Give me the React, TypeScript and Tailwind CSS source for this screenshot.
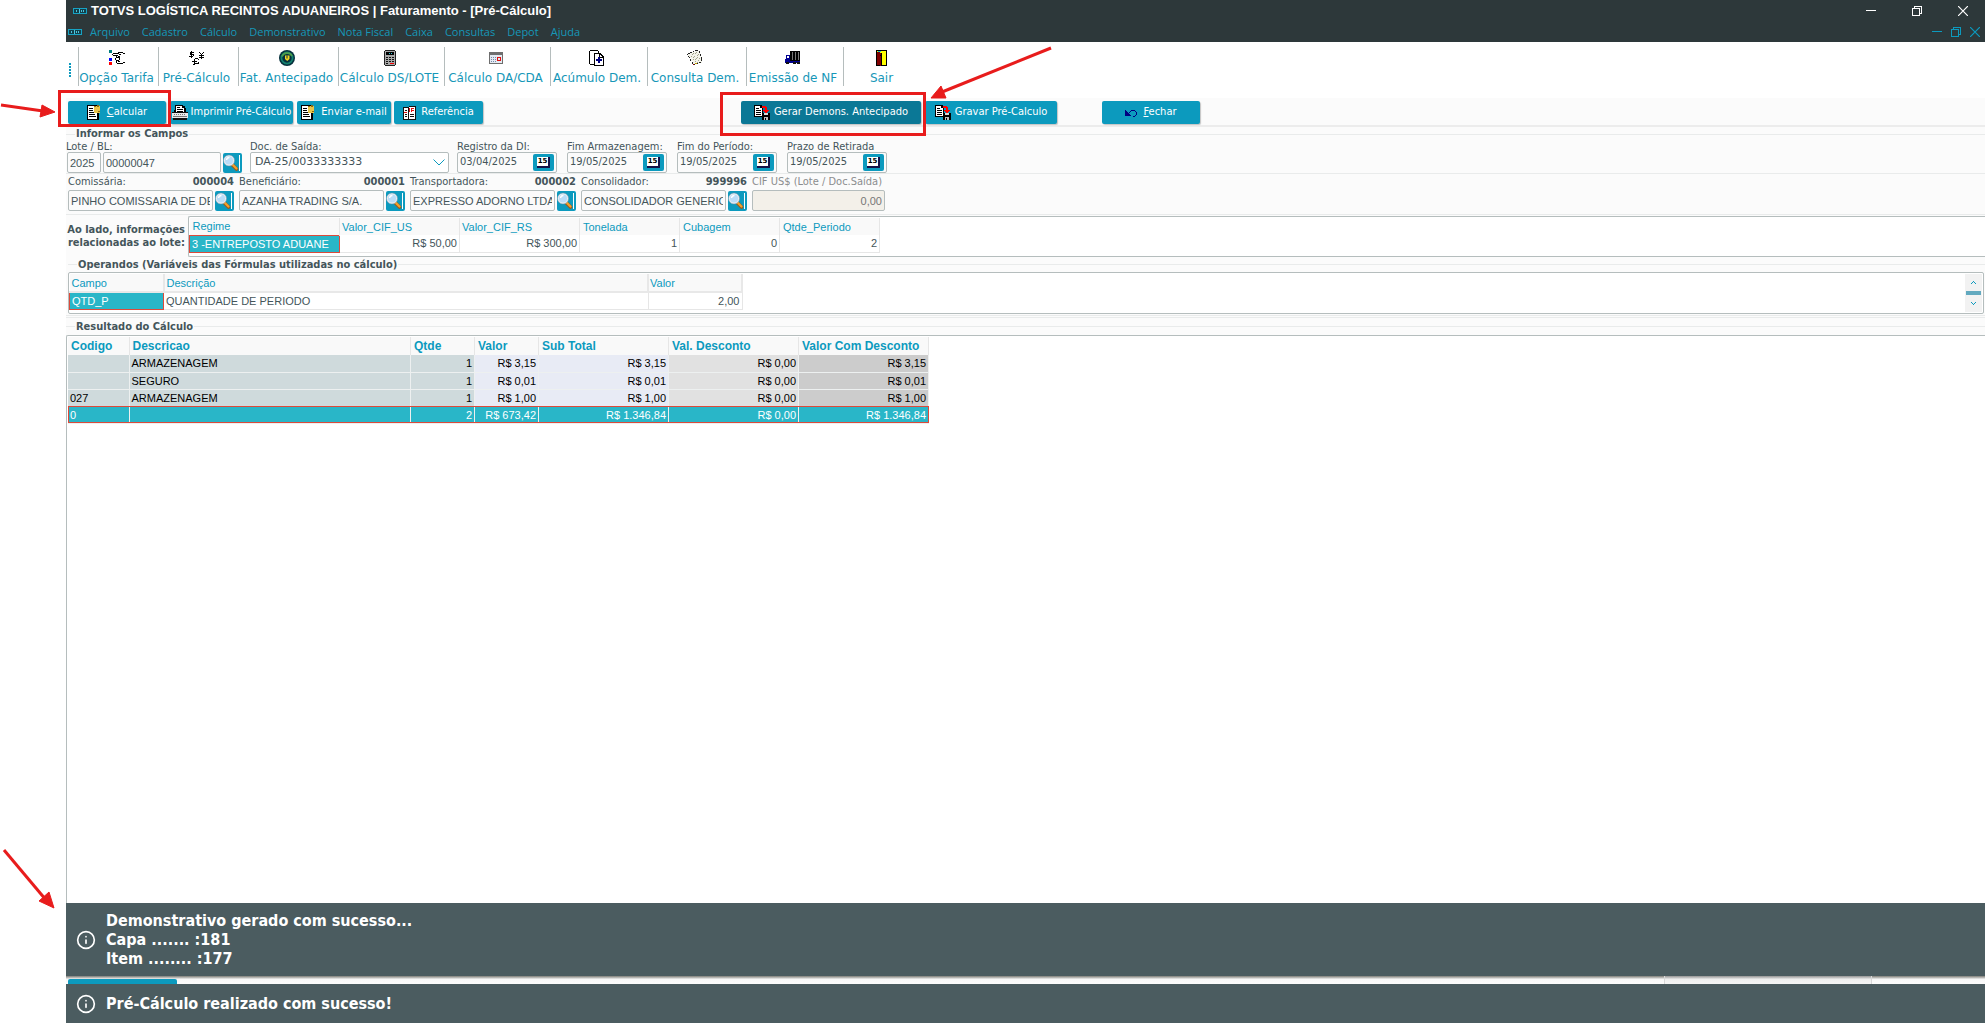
import { ReactNode } from 'react'
import { Info } from 'lucide-react'

const TAHOMA = "font-['DejaVu_Sans_Condensed','Noto_Sans',sans-serif]"
const GRID = "font-['Liberation_Sans',sans-serif]"

const menus = ['Arquivo', 'Cadastro', 'Cálculo', 'Demonstrativo', 'Nota Fiscal', 'Caixa', 'Consultas', 'Depot', 'Ajuda']

function Px({ children, w = 16, h = 16 }: { children: ReactNode; w?: number; h?: number }) {
  return (
    <svg width={w} height={h} viewBox={`0 0 ${w} ${h}`} shapeRendering="crispEdges" className="shrink-0" aria-hidden="true">
      {children}
    </svg>
  )
}

function TotvsMark() {
  return (
    <Px w={14} h={6}>
      <path d="M1 1h12v4H1z" fill="#123f4a" />
      <path d="M1 0h12v1H1zM1 5h12v1H1zM0 0h1v6H0zM13 0h1v6h-1z" fill="#17a3c4" />
      <path d="M3 2h1v2H3zM6 1h1v4H6zM8 2h1v2H8zM10 2h1v2h-1z" fill="#4cc3dc" />
    </Px>
  )
}

function HandIcon() {
  return (
    <Px>
      <path d="M0 0h3v3H0z" fill="#008080" />
      <path d="M0 8h3v3H0z" fill="#00f" />
      <path d="M0 12h3v3H0z" fill="#f00" />
      <path
        d="M4 3h6v1H4zM3 4h1v1H3zM4 5h5v1H4zM10 4h2v1h-2zM9 2h5v1H9zM14 3h2v1h-2zM7 6h1v2H7zM8 7h3v1H8zM6 8h1v2H6zM7 10h3v1H7zM9 6h2v1H9zM10 8h1v2h-1zM7 11h1v2H7zM8 13h6v1H8zM9 11h2v1H9zM14 12h2v1h-2z"
        fill="#000"
      />
    </Px>
  )
}

function CurrencyIcon() {
  return (
    <Px>
      <path
        d="M2 1h1v7H2zM1 2h4v1H1zM1 3h1v1H1zM1 4h4v1H1zM4 5h1v1H4zM0 6h4v1H0zM10 2h1v1h-1zM14 2h1v1h-1zM11 3h1v1h-1zM13 3h1v1h-1zM12 4h1v5h-1zM10 5h5v1h-5zM10 7h5v1h-5zM6 8h3v1H6zM5 9h1v3H5zM3 11h5v1H3zM5 12h1v2H5zM4 14h2v1H4zM6 13h4v1H6zM9 12h1v1H9zM9 9h1v1H9z"
        fill="#000"
      />
    </Px>
  )
}

function CoinIcon() {
  return (
    <svg width="16" height="16" viewBox="0 0 16 16" className="shrink-0" aria-hidden="true">
      <circle cx="8" cy="8" r="8" fill="#06303c" />
      <circle cx="8" cy="8" r="5.6" fill="none" stroke="#14806f" strokeWidth="1.8" />
      <path d="M3 6.5A5.6 5.6 0 0 1 13 6" fill="none" stroke="#4f9f4a" strokeWidth="1.6" />
      <path d="M6 5.5h4.500v3.500L8.200 11 6 9z" fill="#f3d321" />
      <path d="M8 5.500v3" stroke="#06303c" strokeWidth="1" />
    </svg>
  )
}

function CalculatorIcon() {
  return (
    <Px w={12}>
      <path d="M1 0h10v1H1zM0 1h1v14H0zM11 1h1v14h-1zM1 15h10v1H1z" fill="#222" />
      <path d="M1 1h10v14H1z" fill="#a8a8a8" />
      <path d="M2 2h8v3H2z" fill="#000" />
      <path d="M5 3h1v1H5zM7 3h1v1H7z" fill="#2dc7d8" />
      <path d="M2 7h2v1H2zM5 7h2v1H5zM8 7h2v1H8zM2 9h2v1H2zM5 9h2v1H5zM8 9h2v1H8zM2 11h2v1H2zM5 11h2v1H5zM8 11h2v1H8zM2 13h2v1H2z" fill="#111" />
      <path d="M6 13h4v1H6z" fill="#e00" />
    </Px>
  )
}

function ScheduleIcon() {
  return (
    <Px w={14} h={13}>
      <path d="M0 0h14v12H0z" fill="#6e6e6e" />
      <path d="M1 3h12v8H1z" fill="#e4eaf2" />
      <path d="M2 5h1v1H2zM4 5h1v1H4zM6 5h1v1H6zM2 7h1v1H2zM4 7h1v1H4zM6 7h1v1H6zM2 9h1v1H2zM4 9h1v1H4zM6 9h1v1H6z" fill="#7689a8" />
      <path d="M8 5h4v1H8zM8 6h1v3H8zM11 6h1v3h-1zM8 8h4v1H8z" fill="#e01010" />
    </Px>
  )
}

function CopyPlusIcon() {
  return (
    <Px>
      <path d="M1 0h8v1H1zM0 1h1v13H0zM1 14h4v1H1zM9 1h1v2H9z" fill="#000" />
      <path d="M5 3h6l4 4v9H5z" fill="#000" />
      <path d="M6 4h4v4h4v7H6z" fill="#fff" />
      <path d="M11 5h1v1h1v1h-2z" fill="#fff" />
      <path d="M9 7h2v6H9zM7 9h6v2H7z" fill="#000080" />
    </Px>
  )
}

function SheetsIcon() {
  return (
    <Px>
      <path d="M1 4h2V3h2V2h3V1h4v1h1v3h1v3h1v5h-3v1H6v-3H4V8H2V6H1z" fill="#f3f3ea" />
      <path
        d="M0 4h1v1H0zM1 3h2v1H1zM3 2h2v1H3zM6 1h1v1H6zM8 0h3v1H8zM12 1h1v2h-1zM13 4h1v2h-1zM14 7h1v4h-1zM12 12h2v1h-2zM9 13h2v1H9zM6 14h2v1H6zM5 12h1v2H5zM3 9h1v2H3zM2 7h1v1H2zM1 6h1v1H1z"
        fill="#222"
      />
      <path d="M5 4h1v1H5zM8 3h1v1H8zM10 5h1v1h-1zM7 6h1v1H7zM4 6h1v1H4zM9 8h1v1H9zM6 9h1v1H6zM11 10h1v1h-1zM8 11h1v1H8zM6 3h1v1H6zM9 2h1v1H9zM11 4h1v1h-1zM6 7h1v1H6zM10 7h1v1h-1zM12 8h1v1h-1zM8 9h1v1H8zM10 12h1v1h-1z" fill="#a3a48c" />
      <path d="M6 14h1v1H6z" fill="#a00000" />
      <path d="M8 13h2v1H8z" fill="#c8a000" />
    </Px>
  )
}

function TruckIcon() {
  return (
    <Px>
      <path d="M5 1h10v11H5z" fill="#000" />
      <path d="M7 2h1v8H7zM10 2h1v8h-1zM13 2h1v8h-1z" fill="#777" />
      <path d="M1 5h4v8H1zM0 9h1v4H0zM5 11h10v2H5z" fill="#000090" />
      <path d="M2 6h2v2H2z" fill="#fff" />
      <path d="M1 12h3v2H1zM8 12h3v2H8zM12 12h3v2h-3z" fill="#111" />
    </Px>
  )
}

function DoorIcon() {
  return (
    <Px w={11}>
      <path d="M0 0h11v16H0z" fill="#000" />
      <path d="M1 1h9v14H1z" fill="#ff0" />
      <path d="M1 2h3v1h2v12H5v1H4v-1H1z" fill="#800000" />
      <path d="M2 1h3v1H2z" fill="#19c8d8" />
      <path d="M5 3h1v12H5zM4 5h1v1H4z" fill="#000" />
    </Px>
  )
}

function NoteIcon() {
  return (
    <Px w={14} h={15}>
      <path d="M0 0h12v15H0z" fill="#000" />
      <path d="M1 1h9v13H1z" fill="#fff" />
      <path d="M2 3h4v1H2zM2 5h4v1H2zM2 7h5v1H2zM2 9h6v1H2zM2 11h7v1H2z" fill="#000" />
      <path d="M7 1h6v7H7z" fill="#e9c54b" />
      <path d="M7 1h2v1H7zM10 0h2v2h-2zM11 6h2v1h-2z" fill="#8a6d12" />
    </Px>
  )
}

function PrinterIcon() {
  return (
    <Px w={16} h={15}>
      <path d="M3 0h8v1h2v2h1v5H2V5h1z" fill="#000" />
      <path d="M4 1h6v2h2v5H4z" fill="#fff" />
      <path d="M5 2h3v1H5zM5 4h6v1H5zM5 6h6v1H5z" fill="#000" />
      <path d="M0 8h16v5H0z" fill="#e8e8e8" />
      <path d="M0 7h16v1H0zM1 13h14v2H1z" fill="#111" />
      <path d="M2 9h1v1H2zM4 9h1v1H4zM6 9h1v1H6zM8 9h1v1H8zM10 9h1v1h-1zM12 9h1v1h-1zM1 11h14v1H1z" fill="#777" />
    </Px>
  )
}

function ReferenceIcon() {
  return (
    <Px w={13} h={14}>
      <path d="M0 1h6v-1h7v14H0z" fill="#111" />
      <path d="M1 2h4v11H1zM6 1h6v12H6z" fill="#fff" />
      <path d="M2 4h2v1H2zM2 8h2v1H2zM2 10h2v1H2zM7 8h4v1H7zM7 10h4v1H7z" fill="#111" />
      <path d="M6 2h1v4H6zM8 2h3v1H8zM8 3h1v3H8zM9 4h2v1H9zM1 6h3v1H1z" fill="#e01010" />
    </Px>
  )
}

function SaveDocIcon() {
  return (
    <Px w={16} h={15}>
      <path d="M0 0h7l2 2v10H0z" fill="#000" />
      <path d="M1 1h5v2h2v8H1z" fill="#fff" />
      <path d="M2 3h3v1H2zM2 5h5v1H2zM2 7h5v1H2zM2 9h5v1H2z" fill="#000" />
      <path d="M8 1h4v1h1v3h2v1h-1v1h-1v1h-2V7h-1V6H9V5h2V3H8z" fill="#f00" />
      <path d="M8 8h8v7H8z" fill="#000" />
      <path d="M10 8h4v2h-4z" fill="#d8d8d8" />
      <path d="M10 12h4v3h-4z" fill="#bbb" />
      <path d="M11 13h1v2h-1z" fill="#000" />
    </Px>
  )
}

function UndoIcon() {
  return (
    <Px w={13} h={8}>
      <path d="M0 1h1v6H0zM1 2h1v5H1zM2 3h1v4H2zM3 4h1v3H3zM4 5h1v2H4zM5 6h1v1H5zM4 3h1v1H4zM5 2h1v1H5zM6 1h4v1H6zM10 2h1v1h-1zM11 3h1v3h-1zM10 6h1v1h-1zM8 7h2v1H8z" fill="#000080" />
    </Px>
  )
}

function SearchButton({ label }: { label: string }) {
  return (
    <button aria-label={label} className="flex h-[20px] w-[19px] shrink-0 items-center rounded-[2px] bg-[#0c9abe]">
      <svg width="16" height="17" viewBox="0 0 16 17" aria-hidden="true">
        <path d="M8.500 10l5 5" stroke="#9a5a1a" strokeWidth="3.600" strokeLinecap="round" />
        <path d="M9 10l4.500 4.500" stroke="#f5a02c" strokeWidth="2.200" strokeLinecap="round" />
        <circle cx="6" cy="6.500" r="4.800" fill="#b9dcf7" stroke="#e9eef3" strokeWidth="1.500" />
        <circle cx="6" cy="6.500" r="5.500" fill="none" stroke="#6f8da3" strokeWidth="0.500" />
        <path d="M3.500 6a3 3 0 0 1 3-2.500" fill="none" stroke="#fff" strokeWidth="1.400" />
      </svg>
      <span className="h-[16px] w-px bg-white" />
    </button>
  )
}

const tools = [
  { label: 'Opção Tarifa', icon: <HandIcon />, width: 'w-[80px]' },
  { label: 'Pré-Cálculo', icon: <CurrencyIcon />, width: 'w-[80px]' },
  { label: 'Fat. Antecipado', icon: <CoinIcon />, width: 'w-[100px]' },
  { label: 'Cálculo DS/LOTE', icon: <CalculatorIcon />, width: 'w-[106px]' },
  { label: 'Cálculo DA/CDA', icon: <ScheduleIcon />, width: 'w-[106px]' },
  { label: 'Acúmulo Dem.', icon: <CopyPlusIcon />, width: 'w-[97px]' },
  { label: 'Consulta Dem.', icon: <SheetsIcon />, width: 'w-[99px]' },
  { label: 'Emissão de NF', icon: <TruckIcon />, width: 'w-[97px]' },
  { label: 'Sair', icon: <DoorIcon />, width: 'w-[80px]' },
]

function WindowButtons({ small = false }: { small?: boolean }) {
  return (
    <div className={small ? 'flex items-center gap-[9px] pr-[5px] text-[#0c9abe]' : 'flex items-center gap-[36px] pr-[17px] text-white'}>
      <button aria-label="Minimizar"><Px w={10} h={10}><path d="M0 4h10v1H0z" fill="currentColor" /></Px></button>
      <button aria-label="Restaurar"><Px w={10} h={10}><path d="M2 0h8v8H8V7h1V1H3v1H2zM0 2h8v8H0zM1 3v6h6V3z" fill="currentColor" fillRule="evenodd" /></Px></button>
      <button aria-label="Fechar janela">
        <svg width="10" height="10" viewBox="0 0 10 10"><path d="M0 0l10 10M10 0L0 10" stroke="currentColor" strokeWidth="1.200" /></svg>
      </button>
    </div>
  )
}

function ActionButton({ icon, children, className }: { icon: ReactNode; children: ReactNode; className: string }) {
  return (
    <button className={`flex h-[23px] shrink-0 items-center justify-center rounded-[2px] text-[11px] whitespace-nowrap text-white shadow-[1px_1px_1px_#c4c4c4] ${className}`}>
      {icon}
      <span>{children}</span>
    </button>
  )
}

function Legend({ children, className }: { children: ReactNode; className: string }) {
  return (
    <div className={`flex items-center ${className}`}>
      <span className="h-px w-[9px] bg-[#e9ebeb]" />
      <h2 className="px-px text-[11px] leading-[14px] font-bold whitespace-nowrap">{children}</h2>
      <span className="h-px flex-1 bg-[#e9ebeb]" />
    </div>
  )
}

const dates = [
  { id: 'registro', label: 'Registro da DI:', value: '03/04/2025' },
  { id: 'fim-armazenagem', label: 'Fim Armazenagem:', value: '19/05/2025' },
  { id: 'fim-periodo', label: 'Fim do Período:', value: '19/05/2025' },
  { id: 'prazo', label: 'Prazo de Retirada', value: '19/05/2025' },
]

const parties = [
  { id: 'comissaria', label: 'Comissária:', code: '000004', value: 'PINHO COMISSARIA DE DE' },
  { id: 'beneficiario', label: 'Beneficiário:', code: '000001', value: 'AZANHA TRADING S/A.' },
  { id: 'transportadora', label: 'Transportadora:', code: '000002', value: 'EXPRESSO ADORNO LTDA' },
  { id: 'consolidador', label: 'Consolidador:', code: '999996', value: 'CONSOLIDADOR GENERICO' },
]

const results = [
  ['', 'ARMAZENAGEM', '1', 'R$ 3,15', 'R$ 3,15', 'R$ 0,00', 'R$ 3,15'],
  ['', 'SEGURO', '1', 'R$ 0,01', 'R$ 0,01', 'R$ 0,00', 'R$ 0,01'],
  ['027', 'ARMAZENAGEM', '1', 'R$ 1,00', 'R$ 1,00', 'R$ 0,00', 'R$ 1,00'],
  ['0', '', '2', 'R$ 673,42', 'R$ 1.346,84', 'R$ 0,00', 'R$ 1.346,84'],
]
const resultColors = ['bg-[#cfdadc]', 'bg-[#cfdadc]', 'bg-[#cfdadc]', 'bg-[#e8ebf5]', 'bg-[#e8ebf5]', 'bg-[#e1e1e1]', 'bg-[#cccccc]']

const input = 'block h-[21px] rounded-[2px] border border-[#b5bdbd] bg-[#fbfbfb] px-[2px]'

function Field({ id, label, children }: { id: string; label: string; children: ReactNode }) {
  return (
    <div className="flex flex-col">
      <label htmlFor={id} className="h-[11px] text-[11px] leading-[11px] whitespace-nowrap">{label}</label>
      {children}
    </div>
  )
}

function Notice({ children, className }: { children: ReactNode; className: string }) {
  return (
    <div role="status" className={`flex items-center gap-[10px] bg-[#4b5c60] pl-[10px] text-[16px] leading-[19px] font-bold text-white ${className}`}>
      <Info size={20} strokeWidth={2} />
      <div>{children}</div>
    </div>
  )
}

export default function App() {
  return (
    <div className={`relative flex min-h-screen bg-white text-[#44555a] ${TAHOMA}`}>
      <div className="w-[66px] shrink-0" />

      <div className="flex min-w-0 flex-1 flex-col">
        <header className="bg-[#2d383a]">
          <div className="flex h-[21px] items-center justify-between pl-[7px]">
            <div className="flex items-center gap-[4px]">
              <TotvsMark />
              <h1 className="font-['Liberation_Sans',sans-serif] text-[13px] leading-[20px] font-bold text-white">
                TOTVS LOGÍSTICA RECINTOS ADUANEIROS | Faturamento - [Pré-Cálculo]
              </h1>
            </div>
            <WindowButtons />
          </div>
          <div className="flex h-[21px] items-center justify-between pl-[2px]">
            <nav className="flex items-center">
              <TotvsMark />
              <div className="flex gap-[12px] pl-[8px] font-['Open_Sans',sans-serif] text-[11px] leading-[20px] text-[#1697b8]">
                {menus.map((m) => (
                  <a key={m} href="#">{m}</a>
                ))}
              </div>
            </nav>
            <WindowButtons small />
          </div>
        </header>

        <div className="flex h-[56px] items-start bg-white pt-[5px]">
          <div className="flex w-[12px] flex-col gap-px pt-[16px] pl-[3px]">
            {[0, 1, 2, 3, 4].map((n) => (
              <span key={n} className="size-[2px] bg-[#0c9abe]" />
            ))}
          </div>
          {tools.map((t) => (
            <button key={t.label} className={`flex h-[39px] flex-col items-center justify-between border-l border-[#b5bdbd] pr-[4px] ${t.width}`}>
              <span className="flex h-[22px] items-center">{t.icon}</span>
              <span className="font-['DejaVu_Sans',sans-serif] text-[12px] leading-[16px] whitespace-nowrap text-[#1697b8]">{t.label}</span>
            </button>
          ))}
        </div>

        <div className="flex h-[29px] items-start border-b-2 border-[#ececec] bg-[#fbfbfb] pt-[3px] pl-[2px]">
          <div className="relative">
            <ActionButton icon={<NoteIcon />} className="w-[98px] gap-[6px] bg-[#0c9abe]"><u>C</u>alcular</ActionButton>
            <div className="pointer-events-none absolute -top-[11px] -right-[5px] -bottom-[3px] -left-[10px] z-10 border-3 border-[#e81c1c]" />
          </div>
          <ActionButton icon={<PrinterIcon />} className="ml-[4px] w-[123px] gap-[3px] bg-[#0c9abe]">Imprimir Pré-Cálculo</ActionButton>
          <ActionButton icon={<NoteIcon />} className="ml-[4px] w-[94px] gap-[6px] bg-[#0c9abe]">Enviar e-mail</ActionButton>
          <ActionButton icon={<ReferenceIcon />} className="ml-[3px] w-[89px] gap-[5px] bg-[#0c9abe]">Referência</ActionButton>
          <div className="relative ml-[258px]">
            <ActionButton icon={<SaveDocIcon />} className="w-[180px] gap-[4px] bg-[#0b7896]">Gerar Demons. Antecipado</ActionButton>
            <div className="pointer-events-none absolute -top-[9px] -right-[5px] -bottom-[12px] -left-[21px] z-10 border-3 border-[#e81c1c]" />
          </div>
          <ActionButton icon={<SaveDocIcon />} className="ml-[4px] w-[132px] gap-[4px] bg-[#0c9abe]">Gravar Pré-Calculo</ActionButton>
          <ActionButton icon={<UndoIcon />} className="ml-[45px] w-[98px] gap-[5px] bg-[#0c9abe]"><u>F</u>echar</ActionButton>
        </div>

        <section className="bg-[#fbfbfb]">
          <Legend className="h-[14px]">Informar os Campos</Legend>
          <div className="flex border-b border-[#e9ebeb]">
            <Field id="lote" label="Lote / BL:">
              <div className={`flex items-center gap-[2px] pl-px text-[11px] ${GRID}`}>
                <input aria-label="Ano do lote" defaultValue="2025" className={`${input} w-[34px]`} />
                <input id="lote" defaultValue="00000047" className={`${input} w-[118px]`} />
                <SearchButton label="Pesquisar lote" />
              </div>
            </Field>
            <div className="ml-[8px]">
              <Field id="doc" label="Doc. de Saída:">
                <div className="relative">
                  <select id="doc" className="block h-[21px] w-[199px] appearance-none rounded-[2px] border border-[#b5bdbd] bg-white pl-[4px] font-['DejaVu_Sans',sans-serif] text-[11px]">
                    <option>DA-25/0033333333</option>
                  </select>
                  <svg width="12" height="7" viewBox="0 0 12 7" className="pointer-events-none absolute top-[7px] right-[4px]">
                    <path d="M.5.5L6 6l5.500-5.500" fill="none" stroke="#0c9abe" />
                  </svg>
                </div>
              </Field>
            </div>
            <div className="ml-[8px] flex gap-[10px]">
              {dates.map((d) => (
                <Field key={d.id} id={d.id} label={d.label}>
                  <div className="flex h-[21px] w-[100px] items-center justify-between rounded-[2px] border border-[#b5bdbd] bg-[#fbfbfb] px-[2px]">
                    <input id={d.id} defaultValue={d.value} className="w-[66px] bg-transparent text-[11px]" />
                    <button aria-label={`Calendário ${d.label}`} className="flex h-[17px] w-[21px] items-center justify-center rounded-[2px] bg-[#0c9abe]">
                      <span className="border-r-2 border-b-2 border-[#12124a] bg-white px-px font-['DejaVu_Sans',sans-serif] text-[7px] leading-[9px] font-bold text-black">15</span>
                    </button>
                  </div>
                </Field>
              ))}
            </div>
          </div>

          <div className="flex gap-[5px] border-b border-[#e9ebeb] pb-[3px] pl-[2px]">
            {parties.map((p) => (
              <div key={p.id} className="w-[166px]">
                <div className="flex h-[16px] items-center justify-between text-[11px] leading-[16px]">
                  <label htmlFor={p.id}>{p.label}</label>
                  <b>{p.code}</b>
                </div>
                <div className={`flex items-center gap-[2px] text-[11px] ${GRID}`}>
                  <input id={p.id} defaultValue={p.value} className={`${input} w-[145px]`} />
                  <SearchButton label={`Pesquisar ${p.label}`} />
                </div>
              </div>
            ))}
            <div className="w-[133px]">
              <label htmlFor="cif" className="block h-[16px] text-[11px] leading-[16px] whitespace-nowrap text-[#8b8d8e]">CIF US$ (Lote / Doc.Saída)</label>
              <input id="cif" defaultValue="0,00" readOnly className={`block h-[21px] w-full rounded-[2px] border border-[#b5bdbd] bg-[#f3f0e9] px-[2px] text-right text-[11px] text-[#777] ${GRID}`} />
            </div>
          </div>

          <div className="flex pt-px">
            <p className="w-[122px] pt-[7px] pr-[3px] text-right text-[11px] leading-[13px] font-bold whitespace-nowrap">
              Ao lado, informações
              <br />
              relacionadas ao lote:
            </p>
            <div className="h-[41px] flex-1 rounded-l-[2px] border border-r-0 border-[#b5bdbd] bg-white pt-px">
              <table className={`w-[690px] table-fixed border-collapse text-[11px] leading-[14px] ${GRID}`}>
                <thead>
                  <tr className="h-[17px] bg-[#f9f9f9] text-left text-[#0c9abe]">
                    <th className="w-[150px] border-r border-[#e6e6e6] pl-[3px] font-normal">Regime</th>
                    <th className="w-[120px] border-r border-[#e6e6e6] pl-[2px] font-normal">Valor_CIF_US</th>
                    <th className="w-[120px] border-r border-[#e6e6e6] pl-[2px] font-normal">Valor_CIF_RS</th>
                    <th className="w-[100px] border-r border-[#e6e6e6] pl-[3px] font-normal">Tonelada</th>
                    <th className="w-[100px] border-r border-[#e6e6e6] pl-[3px] font-normal">Cubagem</th>
                    <th className="w-[100px] border-r border-[#e6e6e6] pl-[3px] font-normal">Qtde_Periodo</th>
                  </tr>
                </thead>
                <tbody>
                  <tr className="h-[17px] text-right">
                    <td className="border border-[#dd4a3a] bg-[#29b6c8] pl-[2px] text-left text-white">3 -ENTREPOSTO ADUANE</td>
                    {['R$ 50,00', 'R$ 300,00', '1', '0', '2'].map((v) => (
                      <td key={v} className="border-r border-b border-[#e6e6e6] pr-[2px]">{v}</td>
                    ))}
                  </tr>
                </tbody>
              </table>
            </div>
          </div>

          <Legend className="h-[15px] pl-[2px]">Operandos (Variáveis das Fórmulas utilizadas no cálculo)</Legend>
          <div className="mr-px ml-[2px] flex h-[42px] items-start justify-between rounded-[2px] border border-[#b5bdbd] bg-white pt-px">
            <table className={`w-[674px] table-fixed border-collapse text-[11px] leading-[14px] ${GRID}`}>
              <thead>
                <tr className="h-[18px] bg-[#f9f9f9] text-left text-[#0c9abe]">
                  <th className="w-[94px] border-r-2 border-b-2 border-[#e8e8e8] pl-[2px] font-normal">Campo</th>
                  <th className="border-r-2 border-b-2 border-[#e8e8e8] pl-[2px] font-normal">Descrição</th>
                  <th className="w-[94px] border-r-2 border-b-2 border-[#e8e8e8] pl-[1px] font-normal">Valor</th>
                </tr>
              </thead>
              <tbody>
                <tr className="h-[17px]">
                  <td className="border border-[#dd4a3a] bg-[#29b6c8] pl-[2px] text-white">QTD_P</td>
                  <td className="border-r border-b border-[#e6e6e6] pl-[2px]">QUANTIDADE DE PERIODO</td>
                  <td className="border-r border-b border-[#e6e6e6] pr-[2px] text-right">2,00</td>
                </tr>
              </tbody>
            </table>
            <div className="mr-px flex h-[38px] w-[17px] flex-col items-center justify-between bg-[#f2f2f2] py-[7px] text-[#0c9abe]">
              <button aria-label="Rolar para cima"><Px w={5} h={3}><path d="M2 0h1v1H2zM1 1h1v1H1zM3 1h1v1H3zM0 2h1v1H0zM4 2h1v1H4z" fill="currentColor" /></Px></button>
              <span className="h-[4px] w-[15px] bg-[#62a9bf]" />
              <button aria-label="Rolar para baixo"><Px w={5} h={3}><path d="M0 0h1v1H0zM4 0h1v1H4zM1 1h1v1H1zM3 1h1v1H3zM2 2h1v1H2z" fill="currentColor" /></Px></button>
            </div>
          </div>
          <div className="mt-px h-[3px] border-y border-[#e9ebeb]" />
          <Legend className="h-[17px]">Resultado do Cálculo</Legend>
        </section>

        <main className="flex-1 rounded-tl-[2px] border-t border-l border-[#b5bdbd] bg-white pt-px pl-px">
          <table className={`w-[861px] table-fixed border-collapse text-[11px] leading-[14px] text-black ${GRID}`}>
            <thead>
              <tr className="h-[18px] bg-[#f9f9f9] text-left text-[12px] text-[#0c9abe]">
                <th className="w-[61px] border-r border-[#e6e6e6] pl-[3px]">Codigo</th>
                <th className="border-r border-[#e6e6e6] pl-[3px]">Descricao</th>
                <th className="w-[64px] border-r border-[#e6e6e6] pl-[3px]">Qtde</th>
                <th className="w-[64px] border-r border-[#e6e6e6] pl-[3px]">Valor</th>
                <th className="w-[130px] border-r border-[#e6e6e6] pl-[3px]">Sub Total</th>
                <th className="w-[130px] border-r border-[#e6e6e6] pl-[3px]">Val. Desconto</th>
                <th className="w-[130px] border-r border-[#e6e6e6] pl-[3px]">Valor Com Desconto</th>
              </tr>
            </thead>
            <tbody>
              {results.map((row, r) => (
                <tr key={r} className={r === 3 ? 'h-[17px] text-white outline outline-[#dd4a3a] -outline-offset-1' : 'h-[17px]'}>
                  {row.map((v, c) => (
                    <td key={c} className={`border-r border-b border-[#edf0f0] px-[2px] whitespace-nowrap ${c > 1 ? 'text-right' : ''} ${r === 3 ? 'bg-[#29b6c8]' : resultColors[c]}`}>{v}</td>
                  ))}
                </tr>
              ))}
            </tbody>
          </table>
        </main>

        <footer>
          <Notice className="h-[73px]">
            Demonstrativo gerado com sucesso...
            <br />
            Capa ....... :181
            <br />
            Item ........ :177
          </Notice>
          <div className="flex h-[8px] items-end justify-between bg-linear-to-b from-[#7d7d78] via-[#f8f8f8] via-40% to-[#fbfbfb] pr-[113px] pl-[2px]">
            <span className="h-[5px] w-[109px] rounded-t-[2px] bg-[#0c9abe]" />
            <span className="h-[8px] w-[208px] border-x border-[#d8d8d8] bg-linear-to-b from-[#949494] via-[#efefef] via-40% to-[#f5f5f5]" />
          </div>
          <Notice className="h-[39px]">Pré-Cálculo realizado com sucesso!</Notice>
        </footer>
      </div>

      <svg width="1060" height="920" viewBox="0 0 1060 920" className="pointer-events-none absolute top-0 left-0 z-20" aria-hidden="true">
        <g stroke="#e81c1c" strokeWidth="3" fill="#e81c1c">
          <path d="M1 105l42 6" />
          <path d="M55 112l-15 5 2-12z" strokeWidth="1" />
          <path d="M1051 48L942 92" />
          <path d="M931 98l10-12 5 12z" strokeWidth="1" />
          <path d="M4 850l42 50" />
          <path d="M54 908l-15-7 10-9z" strokeWidth="1" />
        </g>
      </svg>
    </div>
  )
}
